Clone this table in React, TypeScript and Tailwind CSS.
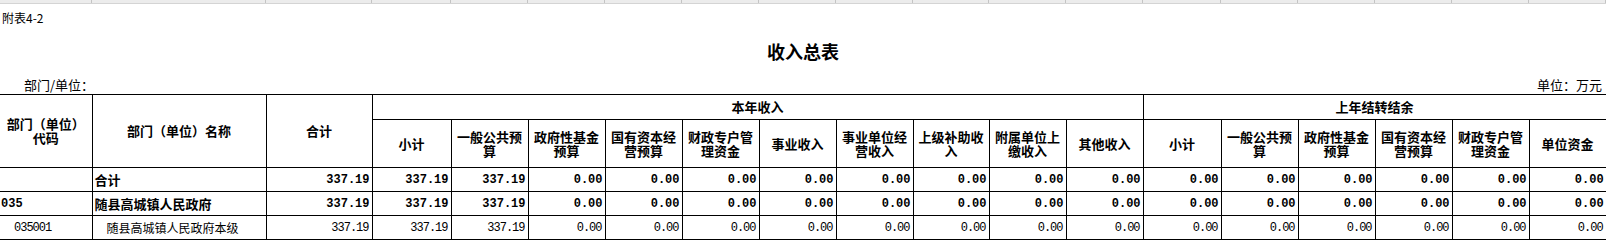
const colWidths = [
  "w-[92px]",
  "w-[174px]",
  "w-[106px]",
  "w-[79px]",
  "w-[77px]",
  "w-[77px]",
  "w-[77px]",
  "w-[77px]",
  "w-[77px]",
  "w-[77px]",
  "w-[76px]",
  "w-[77px]",
  "w-[77px]",
  "w-[78px]",
  "w-[77px]",
  "w-[77px]",
  "w-[77px]",
  "w-[77px]",
  "w-[77px]",
];

const currentYear = [
  "小计",
  "一般公共预算",
  "政府性基金预算",
  "国有资本经营预算",
  "财政专户管理资金",
  "事业收入",
  "事业单位经营收入",
  "上级补助收入",
  "附属单位上缴收入",
  "其他收入",
];

const lastYear = [
  "小计",
  "一般公共预算",
  "政府性基金预算",
  "国有资本经营预算",
  "财政专户管理资金",
  "单位资金",
];

const amounts = [
  "337.19",
  "337.19",
  "337.19",
  "0.00",
  "0.00",
  "0.00",
  "0.00",
  "0.00",
  "0.00",
  "0.00",
  "0.00",
  "0.00",
  "0.00",
  "0.00",
  "0.00",
  "0.00",
  "0.00",
];

const rows = [
  { code: "", name: "合计", bold: true },
  { code: "035", name: "随县高城镇人民政府", bold: true },
  { code: "035001", name: "随县高城镇人民政府本级", bold: false },
];

const cjk = "font-['Noto_Sans_CJK_SC',sans-serif]";
const mono = "font-['Liberation_Mono','Noto_Sans_CJK_SC',monospace]";

export default function App() {
  return (
    <div className={`w-[1606px] h-[242px] bg-white text-black overflow-hidden ${cjk}`}>
      {/* sheet column strip */}
      <div className="flex h-[4px] bg-[#ececec] border-b border-[#d4d4d4]">
        {colWidths.map((w, i) => (
          <div key={i} className={`${w} shrink-0 border-r border-[#c4c4c4]`} />
        ))}
      </div>

      <div className="h-[28px] pl-[2px] text-[12px] leading-[28px]">附表4-2</div>

      <div className="h-[38px] flex items-center justify-center text-[18px] font-bold">
        收入总表
      </div>

      <div className="h-[24px] flex items-end justify-between pl-[24px] pr-[4px] text-[13px] leading-[18px]">
        <span>部门/单位：</span>
        <span>单位：万元</span>
      </div>

      <table className="table-fixed border-collapse w-[1606px]">
        <colgroup>
          {colWidths.map((w, i) => (
            <col key={i} className={w} />
          ))}
        </colgroup>
        <thead>
          <tr className="h-[25px] text-[13px] font-bold leading-[14px]">
            <th rowSpan={2} className="border border-black border-l-0 px-[4px]">
              部门（单位）代码
            </th>
            <th rowSpan={2} className="border border-black px-[4px]">
              部门（单位）名称
            </th>
            <th rowSpan={2} className="border border-black px-[4px]">
              合计
            </th>
            <th colSpan={10} className="border border-black">
              本年收入
            </th>
            <th colSpan={6} className="border border-black">
              上年结转结余
            </th>
          </tr>
          <tr className="h-[48px] text-[13px] font-bold leading-[14px]">
            {[...currentYear, ...lastYear].map((label, i) => (
              <th key={i} className="border border-black px-[4px]">
                {label}
              </th>
            ))}
          </tr>
        </thead>
        <tbody>
          {rows.map((row) => (
            <tr key={row.name} className="h-[24px]">
              <td
                className={
                  row.bold
                    ? `border border-black border-l-0 pl-[1px] text-[12px] font-bold ${mono}`
                    : `border border-black border-l-0 pl-[14px] text-[12px] tracking-[-1px] ${mono}`
                }
              >
                {row.code}
              </td>
              <td
                className={
                  row.bold
                    ? "border border-black pl-[2px] text-[13px] font-bold"
                    : "border border-black pl-[14px] text-[12px]"
                }
              >
                {row.name}
              </td>
              {amounts.map((v, i) => (
                <td
                  key={i}
                  className={
                    row.bold
                      ? `border border-black pr-[2px] text-right text-[12px] font-bold ${mono}`
                      : `border border-black pr-[3px] text-right text-[12px] tracking-[-1px] ${mono}`
                  }
                >
                  {v}
                </td>
              ))}
            </tr>
          ))}
        </tbody>
      </table>
    </div>
  );
}
